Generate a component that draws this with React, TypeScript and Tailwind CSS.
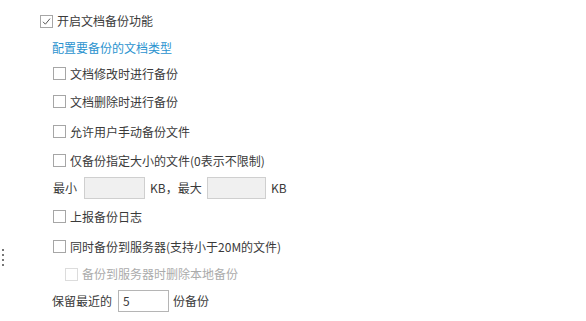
import React from 'react';

const font = { fontFamily: '"Noto Sans CJK SC", "Noto Sans", sans-serif' };

function Box({ checked = false, disabled = false }: { checked?: boolean; disabled?: boolean }) {
  return (
    <span
      className={`flex h-[13px] w-[13px] shrink-0 items-center justify-center border bg-white ${
        disabled ? 'border-[#dcdcdc]' : 'border-[#a6a6a6]'
      }`}
    >
      {checked && (
        <svg width="11" height="11" viewBox="0 0 11 11">
          <path d="M2 5.8 L4.4 8.2 L9 2.6" fill="none" stroke="#555" strokeWidth="1" />
        </svg>
      )}
    </span>
  );
}

function Row({
  h,
  indent,
  children,
}: {
  h: string;
  indent: string;
  children: React.ReactNode;
}) {
  return <div className={`flex items-center ${h} ${indent}`}>{children}</div>;
}

export default function App() {
  return (
    <div className="relative h-[321px] w-[586px] bg-white text-[12px] text-[#3a3a3a]" style={font}>
      {/* splitter handle */}
      <div className="absolute left-[2px] top-[249px] flex flex-col gap-[3px]">
        <span className="h-[2px] w-[2px] bg-[#777]" />
        <span className="h-[2px] w-[2px] bg-[#777]" />
        <span className="h-[2px] w-[2px] bg-[#777]" />
        <span className="h-[2px] w-[2px] bg-[#777]" />
      </div>

      <div className="flex flex-col pt-[8px]">
        <Row h="h-[26px]" indent="pl-[40px] gap-[4px]">
          <Box checked />
          <span>开启文档备份功能</span>
        </Row>

        <Row h="h-[27px]" indent="pl-[52px]">
          <span className="text-[#2b93cf]">配置要备份的文档类型</span>
        </Row>

        <Row h="h-[25px]" indent="pl-[53px] gap-[4px]">
          <Box />
          <span>文档修改时进行备份</span>
        </Row>

        <Row h="h-[31px]" indent="pl-[53px] gap-[4px]">
          <Box />
          <span>文档删除时进行备份</span>
        </Row>

        <Row h="h-[29px]" indent="pl-[53px] gap-[4px]">
          <Box />
          <span>允许用户手动备份文件</span>
        </Row>

        <Row h="h-[29px]" indent="pl-[53px] gap-[4px]">
          <Box />
          <span>仅备份指定大小的文件(0表示不限制)</span>
        </Row>

        <Row h="h-[25px]" indent="pl-[53px]">
          <span className="w-[31px]">最小</span>
          <span className="h-[22px] w-[61px] border border-[#cfcfcf] bg-[#f0f0f0]" />
          <span className="ml-[5px] w-[57px]">KB，最大</span>
          <span className="h-[22px] w-[59px] border border-[#cfcfcf] bg-[#f0f0f0]" />
          <span className="ml-[5px]">KB</span>
        </Row>

        <Row h="h-[33px]" indent="pl-[53px] gap-[4px]">
          <Box />
          <span>上报备份日志</span>
        </Row>

        <Row h="h-[27px]" indent="pl-[53px] gap-[4px]">
          <Box />
          <span>同时备份到服务器(支持小于20M的文件)</span>
        </Row>

        <Row h="h-[28px]" indent="pl-[65px] gap-[4px]">
          <Box disabled />
          <span className="text-[#ababab]">备份到服务器时删除本地备份</span>
        </Row>

        <Row h="h-[26px]" indent="pl-[52px]">
          <span className="w-[66px]">保留最近的</span>
          <span className="flex h-[22px] w-[51px] items-center border border-[#b5b5b5] bg-white pl-[4px]">
            5
          </span>
          <span className="ml-[4px]">份备份</span>
        </Row>
      </div>
    </div>
  );
}
